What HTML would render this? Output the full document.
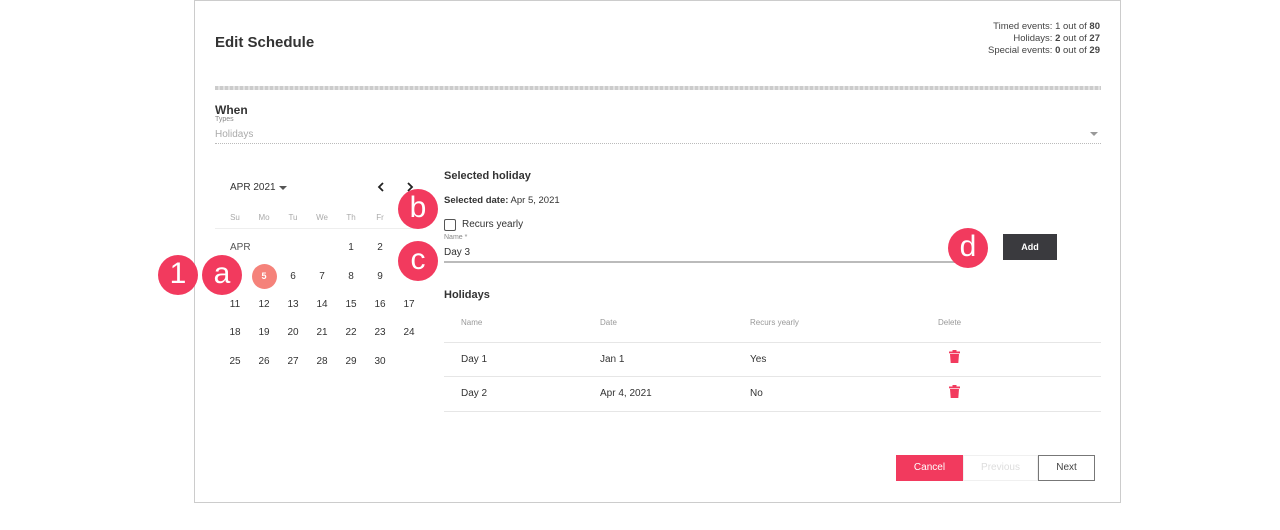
<!DOCTYPE html>
<html><head><style>
*{margin:0;padding:0;box-sizing:border-box}
body{width:1280px;height:530px;background:#fff;font-family:"Liberation Sans",sans-serif;color:#333;position:relative;overflow:hidden}
.a{position:absolute;white-space:nowrap}
.card{position:absolute;left:194px;top:0px;width:927px;height:503px;border:1px solid #ccc}
.badge{position:absolute;width:40px;height:40px;border-radius:50%;background:#f23a5e;color:#fff;font-size:30px;text-align:center;line-height:38px}
.d{font-size:10px;color:#333;width:20px;text-align:center}
.wd{font-size:8px;color:#aaa;width:20px;text-align:center}
.t{font-size:10px;color:#333}
.th{font-size:8px;color:#999}
.trash{position:absolute;width:11px;height:13px}
</style></head><body>
<div class="card"></div>
<div class="a" style="left:215px;top:34px;font-size:15px;font-weight:bold;color:#333">Edit Schedule</div>
<div class="a" style="right:180px;top:21px;font-size:9.5px;line-height:12px;text-align:right;color:#444">Timed events: 1 out of <b>80</b><br>Holidays: <b>2</b> out of <b>27</b><br>Special events: <b>0</b> out of <b>29</b></div>
<div class="a" style="left:215px;top:86px;width:886px;height:4px;background:repeating-linear-gradient(90deg,#ccc 0 3px,#e2e2e2 3px 5px)"></div>
<div class="a" style="left:215px;top:103px;font-size:12px;font-weight:bold">When</div>
<div class="a" style="left:215px;top:116px;font-size:7px;color:#888">Types</div>
<div class="a" style="left:215px;top:129px;font-size:10px;color:#aaa">Holidays</div>
<div class="a" style="left:1090px;top:132px;width:0;height:0;border-left:4px solid transparent;border-right:4px solid transparent;border-top:4px solid #999"></div>
<div class="a" style="left:215px;top:143px;width:886px;border-top:1px dotted #bbb"></div>

<div class="a" style="left:230px;top:182px;font-size:10px">APR 2021</div>
<div class="a" style="left:279px;top:186px;width:0;height:0;border-left:4px solid transparent;border-right:4px solid transparent;border-top:4px solid #555"></div>
<svg class="a" style="left:376px;top:181px" width="10" height="12"><path d="M7 2 L3 6 L7 10" stroke="#222" stroke-width="1.8" fill="none"/></svg>
<svg class="a" style="left:405px;top:181px" width="10" height="12"><path d="M3 2 L7 6 L3 10" stroke="#222" stroke-width="1.8" fill="none"/></svg>
<div class="a wd" style="left:225px;top:213px">Su</div><div class="a wd" style="left:254px;top:213px">Mo</div><div class="a wd" style="left:283px;top:213px">Tu</div><div class="a wd" style="left:312px;top:213px">We</div><div class="a wd" style="left:341px;top:213px">Th</div><div class="a wd" style="left:370px;top:213px">Fr</div>
<div class="a" style="left:215px;top:228px;width:205px;border-top:1px solid #eee"></div>
<div class="a" style="left:230px;top:242px;font-size:10px;color:#555">APR</div>
<div class="a d" style="left:341px;top:242px">1</div><div class="a d" style="left:370px;top:242px">2</div>
<div class="a" style="left:252px;top:264px;width:25px;height:25px;border-radius:50%;background:#f5827a"></div>
<div class="a d" style="left:254px;top:271px;color:#fff;font-size:9px;font-weight:bold">5</div>
<div class="a d" style="left:283px;top:271px">6</div><div class="a d" style="left:312px;top:271px">7</div><div class="a d" style="left:341px;top:271px">8</div><div class="a d" style="left:370px;top:271px">9</div>
<div class="a d" style="left:225px;top:299px">11</div><div class="a d" style="left:254px;top:299px">12</div><div class="a d" style="left:283px;top:299px">13</div><div class="a d" style="left:312px;top:299px">14</div><div class="a d" style="left:341px;top:299px">15</div><div class="a d" style="left:370px;top:299px">16</div><div class="a d" style="left:399px;top:299px">17</div>
<div class="a d" style="left:225px;top:327px">18</div><div class="a d" style="left:254px;top:327px">19</div><div class="a d" style="left:283px;top:327px">20</div><div class="a d" style="left:312px;top:327px">21</div><div class="a d" style="left:341px;top:327px">22</div><div class="a d" style="left:370px;top:327px">23</div><div class="a d" style="left:399px;top:327px">24</div>
<div class="a d" style="left:225px;top:356px">25</div><div class="a d" style="left:254px;top:356px">26</div><div class="a d" style="left:283px;top:356px">27</div><div class="a d" style="left:312px;top:356px">28</div><div class="a d" style="left:341px;top:356px">29</div><div class="a d" style="left:370px;top:356px">30</div>

<div class="a" style="left:444px;top:170px;font-size:11px;font-weight:bold">Selected holiday</div>
<div class="a" style="left:444px;top:195px;font-size:9.5px"><b>Selected date:</b> Apr 5, 2021</div>
<div class="a" style="left:444px;top:219px;width:12px;height:12px;border:1.5px solid #555;border-radius:2px"></div>
<div class="a" style="left:462px;top:219px;font-size:10px">Recurs yearly</div>
<div class="a" style="left:444px;top:234px;font-size:7px;color:#888">Name *</div>
<div class="a" style="left:444px;top:247px;font-size:10px">Day 3</div>
<div class="a" style="left:444px;top:261px;width:520px;border-top:2px solid #bbb"></div>
<div class="a" style="left:1003px;top:234px;width:54px;height:26px;background:#3a3a3e;color:#fff;font-size:9px;font-weight:bold;text-align:center;line-height:26px">Add</div>

<div class="a" style="left:444px;top:289px;font-size:11px;font-weight:bold">Holidays</div>
<div class="a th" style="left:461px;top:318px">Name</div><div class="a th" style="left:600px;top:318px">Date</div><div class="a th" style="left:750px;top:318px">Recurs yearly</div><div class="a th" style="left:938px;top:318px">Delete</div>
<div class="a" style="left:444px;top:342px;width:657px;border-top:1px solid #e6e6e6"></div>
<div class="a t" style="left:461px;top:354px">Day 1</div><div class="a t" style="left:600px;top:354px">Jan 1</div><div class="a t" style="left:750px;top:354px">Yes</div>
<svg class="trash" style="left:949px;top:350px" viewBox="0 0 11 13"><rect x="0" y="1.5" width="11" height="1.8" fill="#f23a5e"/><rect x="3.5" y="0" width="4" height="2" fill="#f23a5e"/><path d="M1 4 H10 L9.3 13 H1.7 Z" fill="#f23a5e"/></svg>
<div class="a" style="left:444px;top:376px;width:657px;border-top:1px solid #e6e6e6"></div>
<div class="a t" style="left:461px;top:388px">Day 2</div><div class="a t" style="left:600px;top:388px">Apr 4, 2021</div><div class="a t" style="left:750px;top:388px">No</div>
<svg class="trash" style="left:949px;top:385px" viewBox="0 0 11 13"><rect x="0" y="1.5" width="11" height="1.8" fill="#f23a5e"/><rect x="3.5" y="0" width="4" height="2" fill="#f23a5e"/><path d="M1 4 H10 L9.3 13 H1.7 Z" fill="#f23a5e"/></svg>
<div class="a" style="left:444px;top:411px;width:657px;border-top:1px solid #e6e6e6"></div>

<div class="a" style="left:896px;top:455px;width:67px;height:26px;background:#f23a5e;color:#fff;font-size:10px;text-align:center;line-height:26px">Cancel</div>
<div class="a" style="left:963px;top:455px;width:75px;height:26px;border:1px solid #f0f0f0;color:#ddd;font-size:10px;text-align:center;line-height:24px">Previous</div>
<div class="a" style="left:1038px;top:455px;width:57px;height:26px;border:1px solid #777;color:#444;font-size:10px;text-align:center;line-height:24px">Next</div>

<div class="badge" style="left:158px;top:255px">1</div>
<div class="badge" style="left:202px;top:255px">a</div>
<div class="badge" style="left:398px;top:189px">b</div>
<div class="badge" style="left:398px;top:241px">c</div>
<div class="badge" style="left:948px;top:228px">d</div>
</body></html>
